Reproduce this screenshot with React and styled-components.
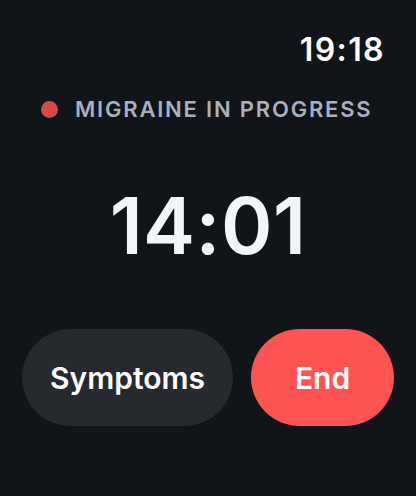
import React from "react";
import styled, { createGlobalStyle } from "styled-components";

const Global = createGlobalStyle`
  html, body { margin: 0; padding: 0; background: #111418; }
  body { font-family: Inter, "Noto Sans", sans-serif; }
`;

const Screen = styled.div`
  width: 416px;
  height: 496px;
  background: #111418;
  display: flex;
  flex-direction: column;
  box-sizing: border-box;
  padding: 32px 22px 0 22px;
  color: #f4f5f7;
`;

const TopBar = styled.div`
  display: flex;
  justify-content: flex-end;
  padding-right: 9px;
`;

const Clock = styled.div`
  font-size: 32px;
  font-weight: 600;
  line-height: 36px;
  color: #ffffff;
  letter-spacing: 1.4px;
`;

const Status = styled.div`
  display: flex;
  align-items: center;
  gap: 17px;
  margin-top: 28px;
  padding-left: 19px;
`;

const Dot = styled.span`
  width: 17px;
  height: 17px;
  border-radius: 50%;
  background: #d24a4a;
  flex: none;
`;

const StatusText = styled.span`
  font-size: 22px;
  font-weight: 600;
  letter-spacing: 1.8px;
  color: #a9b0bf;
  line-height: 26px;
`;

const Timer = styled.div`
  margin-top: 64px;
  text-align: center;
  font-size: 78px;
  font-weight: 600;
  line-height: 80px;
  color: #f4f5f7;
  letter-spacing: 0.5px;
`;

const Actions = styled.div`
  margin-top: 63px;
  display: flex;
  gap: 18px;
`;

const Pill = styled.button`
  height: 97px;
  border: none;
  border-radius: 49px;
  font-family: inherit;
  font-size: 30px;
  font-weight: 600;
  color: #ffffff;
  background: ${(p) => (p.$danger ? "#ff5252" : "#26292e")};
  width: ${(p) => p.$w}px;
  flex: none;
  padding: 0;
`;

export default function App() {
  return (
    <>
      <Global />
      <Screen>
        <TopBar>
          <Clock>19:18</Clock>
        </TopBar>
        <Status>
          <Dot />
          <StatusText>MIGRAINE IN PROGRESS</StatusText>
        </Status>
        <Timer>14:01</Timer>
        <Actions>
          <Pill $w={211}>Symptoms</Pill>
          <Pill $w={143} $danger>End</Pill>
        </Actions>
      </Screen>
    </>
  );
}
